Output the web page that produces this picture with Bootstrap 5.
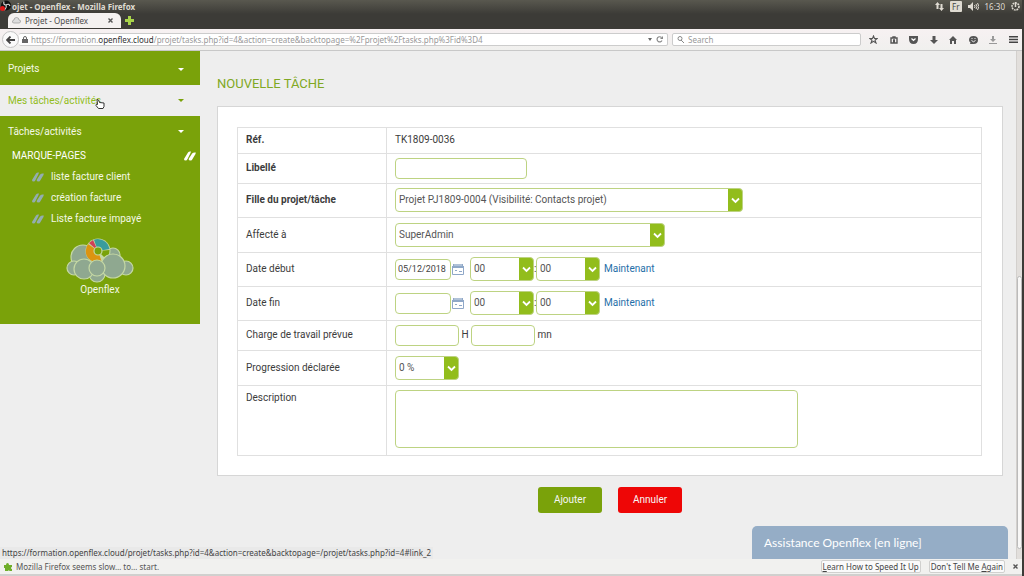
<!DOCTYPE html>
<html lang="fr">
<head>
<meta charset="utf-8">
<meta name="viewport" content="width=device-width, initial-scale=1">
<title>Projet - Openflex</title>
<link href="https://cdn.jsdelivr.net/npm/bootstrap@5.3.0/dist/css/bootstrap.min.css" rel="stylesheet">
<style>
:root{--green:#7aa20a;--lime:#92bd1c;--line:#e0e0e0}
body{font:10px/14px Roboto,"Noto Sans",sans-serif;color:#3c3c3c;background:#eee;border-right:2px solid #3c3b37}
.ui{font-family:"Noto Sans",sans-serif;font-size:8px;line-height:12px}
svg{display:block;flex:none}
.titlebar{height:29px;background:linear-gradient(#59584f,#3c3b37 14px)}
.titlebar .caption{height:13px;color:#dfdbd2}
.tray{gap:6px;padding-right:2px}
.keyboard{background:#dfdbd2;color:#444;line-height:11px;padding:0 2px;border-radius:1px}
.recorder{width:11px;height:11px;left:0;top:0}
.tab{height:15px;width:113px;margin-left:8px;padding:0 8px 0 4px;background:#f4f1f0;border-radius:6px 6px 0 0;color:#4c4c4c}
.toolbar{height:22px;background:linear-gradient(#f7f1f2,#f0f0ee);border-bottom:1px solid #c8c8c8;color:#555}
.field{height:13px;background:#fff;border:1px solid #ccc;border-radius:2px}
.field input{border:0;background:none;outline:0;padding:0;color:#999;min-width:0}
.field input::placeholder{color:#999}
.back{width:17px;height:17px;border:1px solid #c4c4c4;border-radius:50%;background:#fafafa;padding:0;margin-left:2px}
.search{width:189px}
.url{width:649px;border-left:0;padding:0 4px 0 3px}
.address{color:#999;padding-left:3px}
.address b{font-weight:400;color:#333}
.side{width:200px;background:var(--green);color:#fff;height:273px}
.side a{color:#f4f8e6;text-decoration:none}
.menu{height:31px;padding:0 16px 0 8px}
.menu.first{height:34px;padding-top:2px}
.side .menu.hot{background:#eee;color:var(--lime)}
.marks{padding:2px 4px 0 12px}
.marklist{padding-top:3px}
.bookmark{height:21px;padding-left:32px;gap:7px}
.hand{left:95px;top:14px}
h1{font:13px/18px Roboto,sans-serif;color:#80a823;margin:0 0 13px}
.sheet{margin:0 -3px 0 1px}
.panel{background:#fff;border:1px solid #d6d6d6;padding:20px 20px 19px 19px}
.grid-form{width:100%;border-collapse:collapse}
.grid-form th,.grid-form td{border:1px solid var(--line);padding:0 8px 1px;vertical-align:middle}
.grid-form th{width:149px;font-weight:400}
.grid-form th.req{font-weight:700}
.grid-form tr{height:34px}
.grid-form tr.ref{height:26px}
.grid-form tr.low{height:30px}
.grid-form tr.tall{height:35px}
.grid-form tr.desc{height:70px}
.grid-form .desc th{vertical-align:top;padding-top:5px}
.grid-form .desc td{vertical-align:top;padding-top:4px}
.inp,.sel,.area{border:1px solid #bdd382;border-radius:4px;background-color:#fff;color:#555;font-size:10px;line-height:14px;outline:0;display:block}
.inp{height:21px;padding:0 1px;color:#444}
.sel{height:24px;padding:0 20px 0 3px;appearance:none;background:url("data:image/svg+xml,%3Csvg xmlns='http://www.w3.org/2000/svg' width='15' height='24'%3E%3Cpath fill='%2392bd1c' d='M0 0h15v24H0z'/%3E%3Cpath fill='none' stroke='%23fff' stroke-width='1.8' d='m4 10.500 3.500 3.500L11 10.500'/%3E%3C/svg%3E") right center no-repeat #fff;background-origin:border-box;background-clip:border-box}
.cal{margin:0 6px 0 1px}
.inp.w-date{width:56px;font-size:9px;padding:0 2px}.w-num{width:64px}.w-text{width:132px}.w-user{width:270px}.w-task{width:348px}
.unit{width:12px;text-align:center}
.colon{width:2px}
.area{width:403px;height:58px;resize:none}
.now{color:#1f6fa8;text-decoration:none;margin-left:4px}
.buttons{padding-top:11px}
.act{width:64px;height:26px;border:0;border-radius:3px;padding:0;color:#f6f6f6;font-size:10px;line-height:14px;background:var(--green)}
.act.no{background:#ee0606}
.help{right:14px;bottom:0;width:256px;height:33px;border:0;border-radius:5px 5px 0 0;background:#95adc6;color:#fff;font:12px/16px Lato,sans-serif;padding:0 12px}
.status{left:0;bottom:0;height:12px;padding:0 2px;background:#e9e9e9;color:#444}
.scroll{width:6px;background:#e2dfdc;border-left:1px solid #d3d0cd}
.thumb{margin:225px 0 10px;background:#f8f7f6;border:1px solid #bbb;border-radius:3px}
.notice{height:17px;background:#f1f1ef;border-bottom:2px solid #d0d0ce;color:#555}
.notice button{height:13px;border:1px solid #d0d0ce;border-radius:2px;background:#fafafa;padding:0 1px;line-height:10px;color:#444}
</style>
</head>
<body class="d-flex flex-column min-vh-100">
<svg width="0" height="0" class="position-absolute"><defs>
<g id="books"><path d="M0 8 4 1.500Q5 0 7 .5L6.500 2 3.500 8Q3 9.500 1.500 9.500 0 9.500 0 8zM4.600 8l3.500-5.500Q9.500 1 11.800 1.500L11.500 3 8.500 8Q8 9.500 6.500 9.500 4.600 9.500 4.600 8z"/></g>
<g id="cal"><path fill="#8fa8c8" d="M1 1h10v4H1z"/><path fill="#fff" stroke="#8fa8c8" d="M.5 4.500h11v7H.5z"/><path fill="#8fa8c8" d="M0 3h12v2H0zM3 7h2v1H3zM7 8h3v1H7z"/><path stroke="#fff" stroke-width=".6" d="M3 0v3M5 0v3M7 0v3M9 0v3"/></g>
</defs></svg>

<header class="ui">
  <div class="titlebar position-relative">
    <svg class="recorder position-absolute" viewBox="0 0 11 11"><circle cx="6" cy="5.500" r="5" fill="#111"/><path fill="none" stroke="#ddd" stroke-width="1.100" d="M6 5Q3 5 4 1.500M6 5q3-2 4 1M6 5q1 3-2 5"/><circle cx="2.500" cy="8.500" r="2.500" fill="#e01818"/></svg>
    <div class="caption d-flex align-items-center justify-content-between">
      <strong class="ps-2 ms-1">ojet - Openflex - Mozilla Firefox</strong>
      <div class="tray d-flex align-items-center">
        <svg width="9" height="9" fill="#dfdbd2"><path d="M0 3 2.500 0 5 3H3.500v4h-2V3zM4 6h1.500V2h2v4H9L6.500 9z"/></svg>
        <span class="keyboard">Fr</span>
        <svg width="11" height="9" fill="#dfdbd2"><path d="M0 3h2l3-3v9L2 6H0z"/><path fill="none" stroke="#dfdbd2" d="M6.500 3q1 1.500 0 3M8 2q2 2.500 0 5M9.500 1q3 3.500 0 7"/></svg>
        <span>16:30</span>
        <svg width="9" height="9" viewBox="0 0 9 9"><circle cx="4.500" cy="4.500" r="3.500" fill="none" stroke="#dfdbd2" stroke-width="1.600" stroke-dasharray="1.800 .8"/><path stroke="#dfdbd2" stroke-width="1.500" d="M4.500 0v5"/></svg>
      </div>
    </div>
    <div class="d-flex align-items-center gap-1">
      <div class="tab d-flex align-items-center gap-1">
        <svg width="9" height="7"><path fill="#ddd" stroke="#999" stroke-width=".7" d="M2 6Q0 6 .5 4 1 3 2 3 2 .5 4.500 .5T7 3q2 0 1.500 2Q8 6 7 6z"/></svg>
        <span class="flex-grow-1">Projet - Openflex</span>
        <svg width="5" height="5"><path stroke="#555" stroke-width="1.400" d="m.5.500 4 4m0-4-4 4"/></svg>
      </div>
      <svg width="9" height="9"><path fill="#a8d34a" d="M3 0h3v3h3v3H6v3H3V6H0V3h3z"/></svg>
    </div>
  </div>
  <div class="toolbar d-flex align-items-center">
    <button class="back d-flex align-items-center justify-content-center flex-shrink-0" aria-label="Back"><svg width="9" height="8"><path fill="none" stroke="#444" stroke-width="1.800" d="M4.500.500 1 4l3.500 3.500M1 4h8"/></svg></button>
    <div class="field url d-flex align-items-center">
      <svg width="6" height="7" fill="#666"><path d="M0 3h6v4H0z"/><path fill="none" stroke="#666" d="M1.500 3V2q0-1.500 1.500-1.500T4.500 2v1"/></svg>
      <span class="address flex-grow-1 text-nowrap overflow-hidden">https://formation.<b>openflex.cloud</b>/projet/tasks.php?id=4&amp;action=create&amp;backtopage=%2Fprojet%2Ftasks.php%3Fid%3D4</span>
      <svg width="4" height="3"><path fill="#666" d="M0 0h4L2 3z"/></svg>
      <svg class="ms-1" width="7" height="7"><path fill="none" stroke="#888" stroke-width="1.200" d="M6 4.500A2.600 2.600 0 1 1 5.500 1.500"/><path fill="#888" d="M7 0v3H4z"/></svg>
    </div>
    <label class="field search d-flex align-items-center gap-1 px-1 ms-1">
      <svg width="7" height="7"><circle cx="3" cy="2.500" r="2" fill="none" stroke="#888"/><path stroke="#888" d="m4 4 3 3"/></svg>
      <input class="flex-grow-1" type="text" placeholder="Search" aria-label="Search">
    </label>
    <div class="d-flex flex-grow-1 justify-content-between align-items-center ms-2 me-1">
      <svg width="9" height="9"><path fill="none" stroke="#555" stroke-width="1.100" d="m4.500 1 1 2.500h2.700L6 5.200 7 8 4.500 6.300 2 8l1-2.800L.8 3.500h2.700z"/></svg>
      <svg width="8" height="8"><path fill="none" stroke="#555" stroke-width="1.400" d="M1 2h6v5H1zM3 2V1h2v1M3 4h2M3 5.500h2"/></svg>
      <svg width="9" height="8"><path fill="#555" d="M0 0h9v3q0 5-4.500 5T0 3z"/><path fill="none" stroke="#fff" stroke-width="1.200" d="m2.500 2.500 2 2 2-2"/></svg>
      <svg width="8" height="8"><path fill="#555" d="M2.500 0h3v4H8L4 8 0 4h2.500z"/></svg>
      <svg width="8" height="8"><path fill="#555" d="m4 0 4 4H7v4H5V5H3v3H1V4H0z"/></svg>
      <svg width="9" height="8"><path fill="#555" d="M4.500 0Q9 0 9 4T4.500 8L1 8 1.500 6.500Q0 5.500 0 4 0 0 4.500 0z"/><path fill="none" stroke="#eee" d="M2.500 4.500q2 2.500 4 0M3 2v1M6 2v1"/></svg>
      <svg width="8" height="8"><path fill="#999" d="M3 0h2v3h2L4 6 1 3h2zM0 7h8v1H0z"/></svg>
      <svg width="9" height="7" fill="#444"><path d="M0 0h9v1.500H0zM0 2.700h9v1.500H0zM0 5.400h9v1.500H0z"/></svg>
    </div>
  </div>
</header>

<div class="flex-grow-1 d-flex position-relative">
  <nav class="side flex-shrink-0">
    <a href="#" class="menu first d-flex align-items-center justify-content-between">Projets <svg width="6" height="3"><path fill="#fff" d="M0 0h6L3 3z"/></svg></a>
    <a href="#link_2" class="menu hot d-flex align-items-center justify-content-between position-relative">Mes tâches/activités <svg width="6" height="3"><path fill="#7aa20a" d="M0 0h6L3 3z"/></svg>
      <svg class="hand position-absolute" width="10" height="10"><path fill="#fff" stroke="#333" d="M2 .5q1-.5 1.500.5L4.500 3.500 9 4v3.500L8 9.500H3.500L1 6.500 1.500 5l1 .5z"/></svg></a>
    <a href="#" class="menu d-flex align-items-center justify-content-between">Tâches/activités <svg width="6" height="3"><path fill="#fff" d="M0 0h6L3 3z"/></svg></a>
    <div class="marks d-flex align-items-center justify-content-between"><span>MARQUE-PAGES</span><svg width="12" height="10" fill="#fff"><use href="#books"/></svg></div>
    <div class="marklist">
      <a href="#" class="bookmark d-flex align-items-center"><svg width="12" height="10" fill="#93adb0"><use href="#books"/></svg>liste facture client</a>
      <a href="#" class="bookmark d-flex align-items-center"><svg width="12" height="10" fill="#93adb0"><use href="#books"/></svg>création facture</a>
      <a href="#" class="bookmark d-flex align-items-center"><svg width="12" height="10" fill="#93adb0"><use href="#books"/></svg>Liste facture impayé</a>
    </div>
    <a href="#" class="d-flex flex-column align-items-center pt-2">
      <svg width="68" height="46" viewBox="0 0 68 46"><g fill="#8fa890" stroke="#c5d8a4" stroke-width="1.200"><circle cx="17" cy="20" r="12"/><circle cx="47" cy="18" r="7"/><circle cx="8" cy="31" r="7"/><circle cx="60" cy="31" r="7"/><circle cx="31" cy="37" r="8"/><circle cx="18" cy="32" r="10"/></g>
      <circle cx="32" cy="14" r="12.500" fill="#c5d8a4"/><path fill="#3a9c9c" d="M32 14 28 2.700A12 12 0 0 1 43.500 12z"/><path fill="#d04058" d="m32 14-9-8 4-3z"/><path fill="#dc9410" d="M32 14 22 7a12 12 0 0 0 0 14q6 6 14 4.500z"/><path fill="#7aa20a" d="m32 14 11.500-1q0 6-3.500 9z"/><circle cx="32" cy="14" r="4" fill="#7aa20a" stroke="#c5d8a4" stroke-width="1.200"/><circle cx="47" cy="29" r="12" fill="#8fa890" stroke="#c5d8a4" stroke-width="1.200"/><circle cx="31" cy="31" r="8" fill="#8fa890" stroke="#c5d8a4" stroke-width="1.200"/></svg>
      <span>Openflex</span>
    </a>
  </nav>

  <main class="flex-grow-1 px-3">
    <div class="sheet pt-4">
      <h1>NOUVELLE TÂCHE</h1>
      <form>
        <div class="panel">
          <table class="grid-form">
            <tr class="ref"><th class="req">Réf.</th><td>TK1809-0036</td></tr>
            <tr class="low"><th class="req"><label for="lib">Libellé</label></th><td><input id="lib" type="text" class="inp w-text"></td></tr>
            <tr><th class="req"><label for="task">Fille du projet/tâche</label></th><td><select id="task" class="sel w-task"><option>Projet PJ1809-0004 (Visibilité: Contacts projet)</option></select></td></tr>
            <tr class="tall"><th><label for="user">Affecté à</label></th><td><select id="user" class="sel w-user"><option>SuperAdmin</option></select></td></tr>
            <tr><th><label for="start">Date début</label></th><td><div class="d-flex align-items-center"><input id="start" type="text" class="inp w-date" value="05/12/2018"><svg class="cal" width="12" height="12"><use href="#cal"/></svg><select class="sel w-num" aria-label="Heure début"><option>00</option></select><span class="colon">:</span><select class="sel w-num" aria-label="Minute début"><option>00</option></select><a href="#" class="now">Maintenant</a></div></td></tr>
            <tr><th><label for="end">Date fin</label></th><td><div class="d-flex align-items-center"><input id="end" type="text" class="inp w-date"><svg class="cal" width="12" height="12"><use href="#cal"/></svg><select class="sel w-num" aria-label="Heure fin"><option>00</option></select><span class="colon">:</span><select class="sel w-num" aria-label="Minute fin"><option>00</option></select><a href="#" class="now">Maintenant</a></div></td></tr>
            <tr class="low"><th><label for="hours">Charge de travail prévue</label></th><td><div class="d-flex align-items-center"><input id="hours" type="text" class="inp w-num"><label for="hours" class="unit">H</label><input id="mins" type="text" class="inp w-num"><label for="mins">&nbsp;mn</label></div></td></tr>
            <tr class="tall"><th><label for="prog">Progression déclarée</label></th><td><select id="prog" class="sel w-num"><option>0 %</option></select></td></tr>
            <tr class="desc"><th><label for="descr">Description</label></th><td><textarea id="descr" class="area"></textarea></td></tr>
          </table>
        </div>
        <div class="buttons d-flex justify-content-center gap-3">
          <button type="submit" class="act">Ajouter</button>
          <button type="button" class="act no">Annuler</button>
        </div>
      </form>
    </div>
  </main>
  <div class="scroll d-flex flex-column flex-shrink-0"><div class="thumb flex-grow-1"></div></div>
  <div class="status ui position-absolute text-nowrap">https://formation.openflex.cloud/projet/tasks.php?id=4&amp;action=create&amp;backtopage=/projet/tasks.php?id=4#link_2</div>
  <button class="help position-absolute text-start">Assistance Openflex [en ligne]</button>
</div>

<footer class="notice ui d-flex align-items-center gap-2 px-1">
  <div class="d-flex align-items-center gap-1 flex-grow-1"><svg width="8" height="8"><path fill="#6fae2a" d="M0 2h2Q2 0 3.500 0T5 2h3v2q-1 0-1 1t1 1v2H5.500Q5 6.500 4 8H1V5H0z"/></svg>Mozilla Firefox seems slow… to… start.</div>
  <button><u>L</u>earn How to Speed It Up</button>
  <button>Don't Tell Me <u>A</u>gain</button>
  <svg width="5" height="5"><path stroke="#555" stroke-width="1.400" d="m.5.500 4 4m0-4-4 4"/></svg>
</footer>
<script src="https://cdn.jsdelivr.net/npm/bootstrap@5.3.0/dist/js/bootstrap.bundle.min.js"></script>
</body>
</html>
